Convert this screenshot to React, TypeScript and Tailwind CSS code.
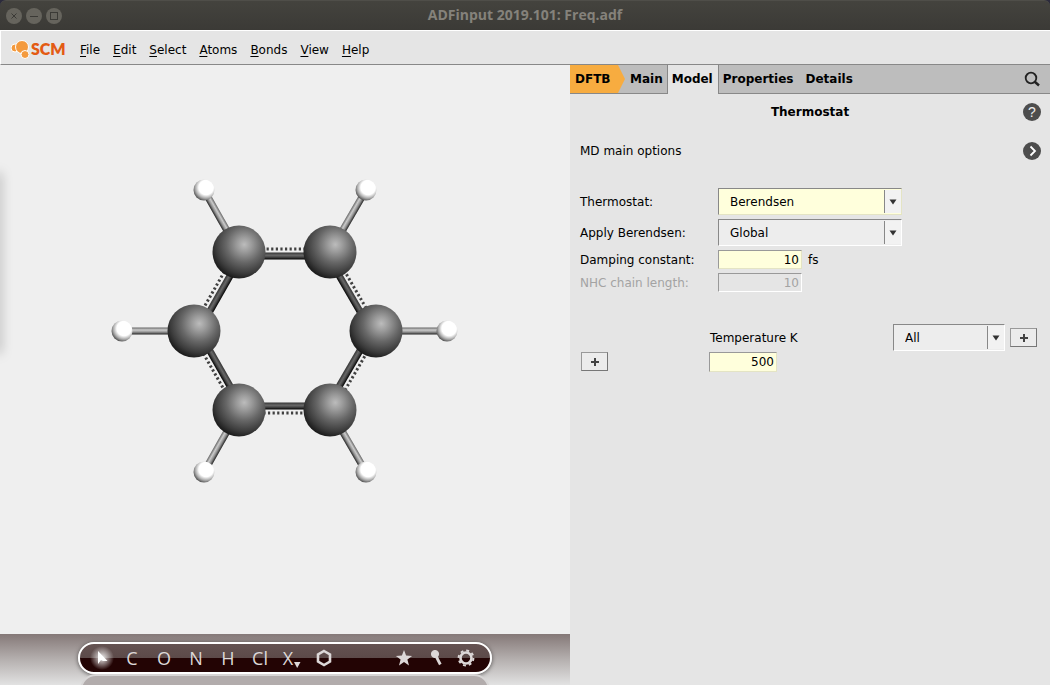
import type { ReactNode } from 'react'

const menuItems = ['File', 'Edit', 'Select', 'Atoms', 'Bonds', 'View', 'Help']
const elements = ['C', 'O', 'N', 'H', 'Cl']

const carbons = [
  [239, 252],
  [330, 252],
  [376, 331],
  [330, 410],
  [239, 410],
  [194, 331],
]
const hydrogens = [
  [204, 190],
  [366, 190],
  [447, 331],
  [366, 472],
  [204, 472],
  [122, 331],
]
const center = [285, 331]

const ringBonds = carbons.map(([x1, y1], i) => {
  const [x2, y2] = carbons[(i + 1) % carbons.length]
  const dx = (x1 + x2) / 2 - center[0]
  const dy = (y1 + y2) / 2 - center[1]
  const length = Math.hypot(dx, dy)
  return { x1, y1, x2, y2, nx: dx / length, ny: dy / length }
})

type BarProps = {
  from: number[]
  to: number[]
  width: number
  gradient: string
}

// a cylinder, shaded across its width
const Bar = ({ from, to, width, gradient }: BarProps) => {
  const flip = from[0] > to[0]
  const [a, b] = flip ? [to, from] : [from, to]
  const length = Math.hypot(b[0] - a[0], b[1] - a[1])
  const angle = (Math.atan2(b[1] - a[1], b[0] - a[0]) * 180) / Math.PI
  return (
    <rect
      x={0}
      y={-width / 2}
      width={length}
      height={width}
      fill={`url(#${gradient})`}
      transform={`translate(${a[0]} ${a[1]}) rotate(${angle})`}
    />
  )
}

const Molecule = () => (
  <svg viewBox="105 171 360 320" className="w-[360px] h-[320px]" role="img" aria-label="Benzene">
    <defs>
      <radialGradient id="carbon" cx="0.6" cy="0.36" r="0.68">
        <stop offset="0" stopColor="#bcbcbc" />
        <stop offset="0.2" stopColor="#9c9c9c" />
        <stop offset="0.5" stopColor="#676767" />
        <stop offset="0.8" stopColor="#3b3b3b" />
        <stop offset="1" stopColor="#161616" />
      </radialGradient>
      <radialGradient id="hydrogen" cx="0.6" cy="0.38" r="0.72">
        <stop offset="0" stopColor="#fff" />
        <stop offset="0.48" stopColor="#fff" />
        <stop offset="0.72" stopColor="#a8a8a8" />
        <stop offset="1" stopColor="#222" />
      </radialGradient>
      <linearGradient id="dark" x1="0" y1="0" x2="0" y2="1">
        <stop offset="0" stopColor="#333" />
        <stop offset="0.4" stopColor="#686868" />
        <stop offset="0.65" stopColor="#484848" />
        <stop offset="1" stopColor="#000" />
      </linearGradient>
      <linearGradient id="light" x1="0" y1="0" x2="0" y2="1">
        <stop offset="0" stopColor="#666" />
        <stop offset="0.35" stopColor="#ccc" />
        <stop offset="0.65" stopColor="#949494" />
        <stop offset="1" stopColor="#222" />
      </linearGradient>
    </defs>
    {hydrogens.map((h, i) => (
      <Bar key={i} from={carbons[i]} to={h} width={7} gradient="light" />
    ))}
    {ringBonds.map((b, i) => (
      <g key={i}>
        <Bar
          from={[b.x1 - b.nx * 4, b.y1 - b.ny * 4]}
          to={[b.x2 - b.nx * 4, b.y2 - b.ny * 4]}
          width={7}
          gradient="dark"
        />
        <line
          x1={b.x1 + b.nx * 3}
          y1={b.y1 + b.ny * 3}
          x2={b.x2 + b.nx * 3}
          y2={b.y2 + b.ny * 3}
          stroke="#404040"
          strokeWidth={3}
          strokeDasharray="2.2 2.4"
        />
      </g>
    ))}
    {hydrogens.map(([x, y], i) => (
      <circle key={i} cx={x} cy={y} r={10.5} fill="url(#hydrogen)" />
    ))}
    {carbons.map(([x, y], i) => (
      <circle key={i} cx={x} cy={y} r={26.5} fill="url(#carbon)" />
    ))}
  </svg>
)

const TitleBar = () => (
  <header className="grid grid-cols-[1fr_auto_1fr] items-center h-[30px] px-1.5 rounded-t-md border-t border-[#4f4e49] bg-linear-to-b from-[#44433e] to-[#3b3a36]">
    <div className="flex gap-1">
      <button aria-label="Close" className="size-4 rounded-full bg-[#66645d]">
        <svg viewBox="0 0 16 16" className="size-4" stroke="#3b3a36" fill="none">
          <path d="M5.5 5.5l5 5M10.5 5.5l-5 5" />
        </svg>
      </button>
      <button aria-label="Minimize" className="size-4 rounded-full bg-[#66645d]">
        <svg viewBox="0 0 16 16" className="size-4" stroke="#3b3a36" fill="none">
          <path d="M4 8.5h8" />
        </svg>
      </button>
      <button aria-label="Maximize" className="size-4 rounded-full bg-[#66645d]">
        <svg viewBox="0 0 16 16" className="size-4" stroke="#3b3a36" fill="none">
          <rect x="4.5" y="4.5" width="7" height="7" />
        </svg>
      </button>
    </div>
    <h1 className="pb-0.5 font-['Open_Sans',sans-serif] text-sm font-bold text-[#85827b]">
      ADFinput 2019.101: Freq.adf
    </h1>
  </header>
)

const MenuBar = () => (
  <nav className="flex items-center h-[35px] pl-2.5 border-t border-t-white border-b border-b-[#888] border-l border-l-white bg-[#e5e5e5]">
    <a
      href="#scm"
      className="flex items-center w-[59px] pt-0.5 font-['Lato',sans-serif] text-base font-extrabold text-[#e35b13]"
    >
      <svg viewBox="0 0 20 20" className="size-5 shrink-0" fill="#f49a3d" stroke="#fff" strokeWidth="1">
        <circle cx="4" cy="9" r="4" />
        <circle cx="11" cy="8" r="6.5" />
        <circle cx="14" cy="15.5" r="4" />
      </svg>
      SCM
    </a>
    <div className="flex gap-[13px] pl-2.5 pt-1">
      {menuItems.map((item) => (
        <button key={item}>
          <span className="underline underline-offset-2">{item[0]}</span>
          {item.slice(1)}
        </button>
      ))}
    </div>
  </nav>
)

const ToolButton = ({ label, children }: { label: string; children: ReactNode }) => (
  <button aria-label={label} className="flex items-center justify-center w-8 h-7">
    {children}
  </button>
)

const Toolbar = () => (
  <div className="h-[51px] pt-2 overflow-hidden bg-linear-to-b from-[#857978] via-[#b5b0af] to-[#e2e2e2]">
    <div className="flex items-center w-[414px] h-8 mx-auto pl-1 pr-2 rounded-full border-2 border-white bg-linear-to-b from-[#655352] from-0% via-[#5c4a49] via-50% to-[#230404] to-50% shadow-[0_1px_4px_#0008] font-['Open_Sans',sans-serif] text-lg text-[#ddd8d8]">
      <ToolButton label="Select">
        <svg viewBox="0 0 28 28" className="size-7">
          <defs>
            <radialGradient id="glow">
              <stop offset="0" stopColor="#fff" stopOpacity="0.9" />
              <stop offset="1" stopColor="#fff" stopOpacity="0" />
            </radialGradient>
          </defs>
          <circle cx="16" cy="14" r="12" fill="url(#glow)" />
          <path d="M12 7l9.500 10h-4.500l-2-1-3 4z" fill="#fff" />
        </svg>
      </ToolButton>
      {elements.map((el) => (
        <ToolButton key={el} label={el}>
          {el}
        </ToolButton>
      ))}
      <ToolButton label="Other element">
        X
        <svg viewBox="0 0 8 8" className="size-2 mt-3" fill="currentColor">
          <path d="M1 2h6.500L4.200 8z" />
        </svg>
      </ToolButton>
      <ToolButton label="Ring">
        <svg viewBox="0 0 18 18" className="size-[18px]" fill="none" stroke="currentColor" strokeWidth="2.600">
          <path d="M9 2l6 3.500v7L9 16l-6-3.500v-7z" />
        </svg>
      </ToolButton>
      <div className="flex ml-auto -space-x-px">
        <ToolButton label="Favorites">
          <svg viewBox="0 0 18 18" className="size-[18px]" fill="currentColor">
            <path d="M9 1l2.100 5.600 6 .3-4.700 3.700 1.600 5.900L9 13.100l-5 3.400 1.600-5.900L.9 6.900l6-.3z" />
          </svg>
        </ToolButton>
        <ToolButton label="Probe">
          <svg viewBox="0 0 18 18" className="size-[18px]" fill="currentColor" stroke="currentColor">
            <circle cx="9" cy="5" r="3.600" />
            <path d="M10.500 8l3.800 7.500" strokeWidth="2.800" />
          </svg>
        </ToolButton>
        <ToolButton label="Settings">
          <svg viewBox="0 0 18 18" className="size-[18px]" fill="none" stroke="currentColor">
            <circle cx="9" cy="9" r="5.500" strokeWidth="2.600" />
            <circle cx="9" cy="9" r="7.400" strokeWidth="2" strokeDasharray="2.900 2.910" />
          </svg>
        </ToolButton>
      </div>
    </div>
    <div className="w-[410px] h-8 mx-auto rounded-full border-2 border-[#d8d6d6] bg-[#b2acac]" />
  </div>
)

const Tabs = () => (
  <nav className="flex h-[29px] border-b border-[#888] bg-[#bdbdbd] font-bold">
    <button className="w-[55px] pl-[5px] text-left bg-[#f7ac40] [clip-path:polygon(0_0,48px_0,55px_50%,48px_100%,0_100%)]">
      DFTB
    </button>
    <button className="pl-[5px] pr-1">Main</button>
    <button className="-mb-px pl-1 pr-[5px] pb-px border-x border-[#888] bg-[#e5e5e5]">Model</button>
    <button className="px-1">Properties</button>
    <button className="px-2">Details</button>
    <button aria-label="Search" className="ml-auto mr-2.5">
      <svg viewBox="0 0 16 16" className="size-4" fill="none" stroke="#222">
        <circle cx="7" cy="7" r="5.300" strokeWidth="1.800" />
        <path d="M10.500 10.500l4.500 4" strokeWidth="2.400" />
      </svg>
    </button>
  </nav>
)

type DropDownProps = {
  id: string
  value: string
  className: string
  label?: string
}

const DropDown = ({ id, value, className, label }: DropDownProps) => (
  <div className={`relative h-[27px] border border-t-[#888] border-l-[#888] ${className}`}>
    <select
      id={id}
      aria-label={label}
      defaultValue={value}
      className="appearance-none w-full h-full pl-[11px] pr-5 outline-none"
    >
      <option>{value}</option>
    </select>
    <span className="absolute right-0 inset-y-px flex items-center justify-center w-[17px] border-l border-[#888] bg-[#f2f2f2] pointer-events-none">
      <svg viewBox="0 0 8 6" className="w-2 h-1.5" fill="#333">
        <path d="M0.500 0.500h7L4 5.500z" />
      </svg>
    </span>
  </div>
)

const PlusButton = ({ label }: { label: string }) => (
  <button
    aria-label={label}
    className="flex items-center justify-center w-[27px] h-[19px] border border-[#999] border-b-[#777] border-r-[#777] bg-[#ececec]"
  >
    <svg viewBox="0 0 8 8" className="size-2" stroke="#444" strokeWidth="2">
      <path d="M4 0v8M0 4h8" />
    </svg>
  </button>
)

const field = 'px-0.5 text-right border border-t-[#999] border-l-[#999] outline-none'

const ThermostatPanel = () => (
  <main>
    <div className="grid grid-cols-[1fr_auto_1fr] items-center h-9">
      <h2 className="col-start-2 font-bold">Thermostat</h2>
      <button
        aria-label="Help"
        className="justify-self-end mr-[9px] size-[18px] rounded-full bg-[#4d4d4d] font-['Liberation_Sans',sans-serif] text-sm leading-[18px] text-[#eee]"
      >
        ?
      </button>
    </div>
    <div className="flex items-center justify-between h-[42px] pl-2.5 pr-[9px]">
      <span>MD main options</span>
      <button aria-label="Open MD main options" className="size-[18px] rounded-full bg-[#4d4d4d]">
        <svg viewBox="0 0 18 18" className="size-[18px]" fill="none" stroke="#fff" strokeWidth="1.800">
          <path d="M7.500 4.500L12 9l-4.500 4.500" />
        </svg>
      </button>
    </div>
    <div className="flex flex-col gap-1 pt-4 pl-2.5">
      <div className="flex items-center">
        <label htmlFor="thermostat" className="w-[138px]">
          Thermostat:
        </label>
        <DropDown
          id="thermostat"
          value="Berendsen"
          className="w-[184px] bg-[#ffffdc] border-b-[#e4e4c4] border-r-[#e4e4c4]"
        />
      </div>
      <div className="flex items-center">
        <label htmlFor="apply" className="w-[138px]">
          Apply Berendsen:
        </label>
        <DropDown id="apply" value="Global" className="w-[184px] bg-[#ededed] border-b-white border-r-white" />
      </div>
      <div className="flex items-center">
        <label htmlFor="damping" className="w-[138px]">
          Damping constant:
        </label>
        <input
          id="damping"
          defaultValue="10"
          className={`w-[84px] h-[19px] bg-[#ffffdc] border-b-[#e4e4c4] border-r-[#e4e4c4] ${field}`}
        />
        <span className="pl-1.5">fs</span>
      </div>
      <div className="flex items-center text-[#a3a3a3]">
        <label htmlFor="nhc" className="w-[138px]">
          NHC chain length:
        </label>
        <input
          id="nhc"
          defaultValue="10"
          disabled
          className={`w-[84px] h-[19px] bg-[#e5e5e5] border-b-white border-r-white ${field}`}
        />
      </div>
    </div>
    <div className="flex items-center pt-8 pl-[140px] pr-[13px]">
      <label htmlFor="temperature">Temperature K</label>
      <DropDown
        id="region"
        label="Region"
        value="All"
        className="w-[112px] ml-auto mr-[5px] bg-[#ededed] border-b-white border-r-white"
      />
      <PlusButton label="Add region" />
    </div>
    <div className="flex pt-px pl-[11px] gap-[101px]">
      <PlusButton label="Add temperature" />
      <input
        id="temperature"
        defaultValue="500"
        className={`w-[68px] h-5 bg-[#ffffdc] border-b-[#e4e4c4] border-r-[#e4e4c4] ${field}`}
      />
    </div>
  </main>
)

const App = () => (
  <div className="flex flex-col min-h-screen bg-[#2c2b3c] font-['DejaVu_Sans',sans-serif] text-xs text-black">
    <TitleBar />
    <MenuBar />
    <div className="flex flex-1">
      <section className="flex flex-col flex-1 bg-[#efefef]">
        <div className="flex flex-1 items-center pb-[38px] overflow-hidden">
          <div className="self-start w-1 h-[180px] mt-[108px] -ml-1 shadow-[0_0_12px_#0006]" />
          <div className="flex flex-1 justify-center">
            <Molecule />
          </div>
        </div>
        <Toolbar />
      </section>
      <section className="w-[480px] bg-[#e5e5e5]">
        <Tabs />
        <ThermostatPanel />
      </section>
    </div>
  </div>
)

export default App
